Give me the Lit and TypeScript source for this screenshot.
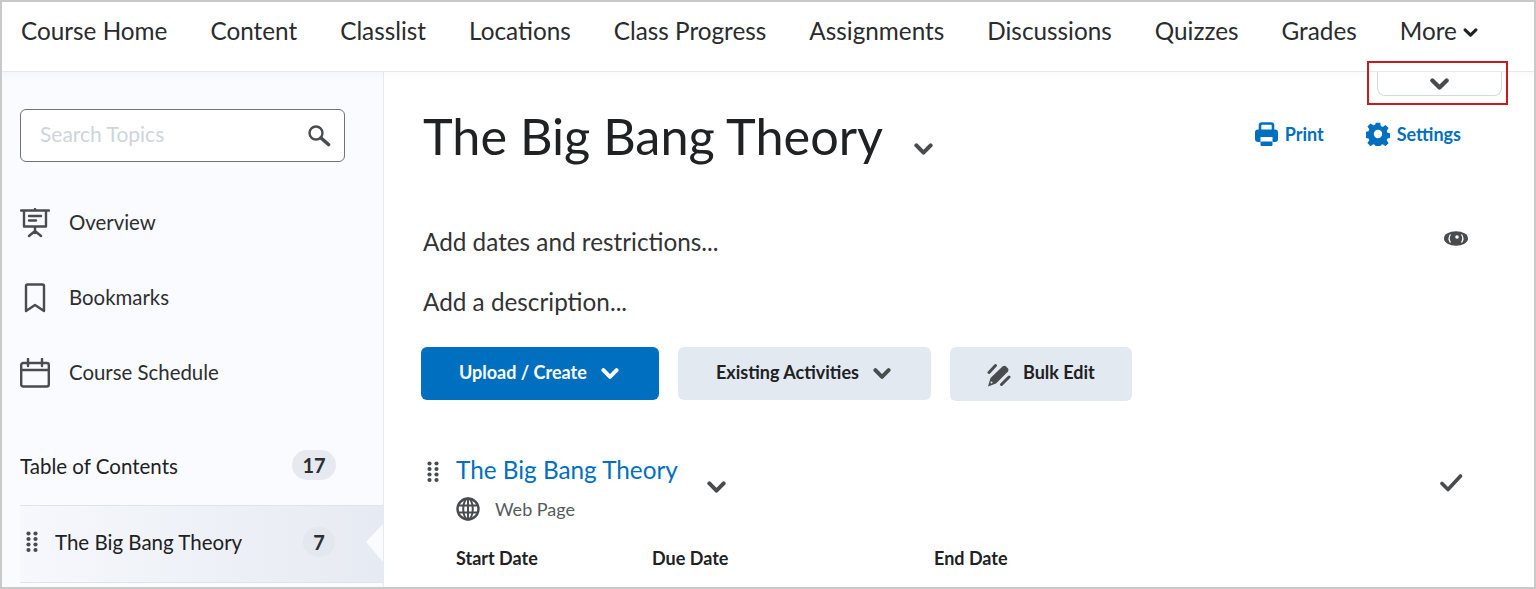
import { LitElement, html, css } from "lit";
import { customElement } from "lit/decorators.js";

const chevron = (w: number, color: string, sw = 3) => html`<svg class="chev" width=${w} height=${Math.round(w * 0.62)} viewBox="0 0 16 10" fill="none" stroke=${color} stroke-width=${sw} stroke-linecap="round" stroke-linejoin="round"><path d="M2 2l6 6 6-6"/></svg>`;

const grip = html`<svg width="12" height="22" viewBox="0 0 12 22" fill="#494c4e"><circle cx="2.500" cy="2.500" r="2.100"/><circle cx="9.500" cy="2.500" r="2.100"/><circle cx="2.500" cy="8" r="2.100"/><circle cx="9.500" cy="8" r="2.100"/><circle cx="2.500" cy="13.500" r="2.100"/><circle cx="9.500" cy="13.500" r="2.100"/><circle cx="2.500" cy="19" r="2.100"/><circle cx="9.500" cy="19" r="2.100"/></svg>`;

const icons = {
  overview: html`<svg width="30" height="30" viewBox="0 0 30 30" fill="none" stroke="#494c4e" stroke-width="2.400" stroke-linecap="round" stroke-linejoin="round"><path d="M1 2.500h28M4 3v15.500h22V3M15 1v1M9 8h12M9 12.500h7M15 19v6M9 28l6-5 6 5"/></svg>`,
  bookmark: html`<svg width="22" height="30" viewBox="0 0 22 30" fill="none" stroke="#494c4e" stroke-width="2.400" stroke-linejoin="round" stroke-linecap="round"><path d="M2 3q0-1.500 1.500-1.500h15Q20 1.500 20 3v25l-9-6-9 6z"/></svg>`,
  calendar: html`<svg width="30" height="30" viewBox="0 0 30 30" fill="none" stroke="#494c4e" stroke-width="2.400" stroke-linejoin="round" stroke-linecap="round"><rect x="1.200" y="5" width="27.600" height="23.500" rx="2"/><path d="M1.500 12h27M8 1v7M22 1v7"/></svg>`,
  search: html`<svg width="24" height="24" viewBox="0 0 24 24" fill="none" stroke="#494c4e"><circle cx="9" cy="9" r="6.500" stroke-width="2.400"/><path d="M14 14l7.500 6.500" stroke-width="3.600" stroke-linecap="round"/></svg>`,
  printer: html`<svg width="23" height="24" viewBox="0 0 23 24"><rect x="5" y="1.500" width="13" height="9" rx="2" fill="none" stroke="#006fbf" stroke-width="2.600"/><rect x="0" y="7.500" width="23" height="12.500" rx="3" fill="#006fbf"/><rect x="5.500" y="15" width="12" height="5" fill="#fff"/><rect x="5.500" y="19.500" width="12" height="4.500" rx="1" fill="#006fbf"/><rect x="7.500" y="17" width="8" height="1.500" fill="#fff"/></svg>`,
  gear: html`<svg width="24" height="24" viewBox="0 0 24 24"><path fill="#006fbf" fill-rule="evenodd" d="M9.800.8h4.400l.6 3.300 1.900.8 2.800-1.900 3.100 3.100-1.900 2.800.8 1.900 3.300.6v4.400l-3.300.6-.8 1.900 1.900 2.800-3.100 3.100-2.800-1.900-1.900.8-.6 3.300H9.800l-.6-3.300-1.900-.8-2.800 1.900-3.100-3.100 1.900-2.800-.8-1.900-3.300-.6V9.800l3.300-.6.8-1.900-1.900-2.800 3.100-3.100 2.800 1.900 1.900-.8zM12 7.800a4.200 4.200 0 1 0 0 8.400 4.200 4.200 0 0 0 0-8.400z"/></svg>`,
  eye: html`<svg width="24" height="15" viewBox="0 0 24 15"><ellipse cx="12" cy="7.500" rx="12" ry="7.300" fill="#494c4e"/><path d="M6.500 3.500a7 7 0 0 0 0 8M17.500 3.500a7 7 0 0 1 0 8" fill="none" stroke="#fff" stroke-width="1.300"/><circle cx="13" cy="6" r="1.800" fill="#fff"/></svg>`,
  pencils: html`<svg width="24" height="25" viewBox="0 0 24 25"><path fill="#494c4e" d="M1 23.500L3.500 15 15.500 3.500Q17.500 2 19 3.500L21 5.500Q22 7 21 8.500L9 20.500z"/><circle cx="4.500" cy="19.500" r="1" fill="#e3e9f1"/><path fill="none" stroke="#494c4e" stroke-width="3" stroke-linecap="round" d="M2 9.500L8.500 2.500M14.500 21.500L22 14"/></svg>`,
  globe: html`<svg width="24" height="24" viewBox="0 0 24 24" fill="none" stroke="#494c4e" stroke-width="2"><circle cx="12" cy="12" r="10.500" stroke-width="2.400"/><ellipse cx="12" cy="12" rx="4.800" ry="10.500"/><path d="M12 1.500v21M2 8.500h20M2 15.500h20"/></svg>`,
  check: html`<svg width="24" height="20" viewBox="0 0 24 20" fill="none" stroke="#494c4e" stroke-width="3.600" stroke-linecap="round" stroke-linejoin="round"><path d="M3 10.500l6 6L21.500 3"/></svg>`,
};

@customElement("app-root")
export class AppRoot extends LitElement {
  static styles = css`
    :host { display: block; width: 1536px; height: 589px; overflow: hidden; }
    * { box-sizing: border-box; }
    .frame { position: relative; width: 1536px; height: 589px; border: 2px solid #c9c9c9; display: flex; flex-direction: column; overflow: hidden; background: #fff; font-family: Lato, "Liberation Sans", sans-serif; color: #202122; }
    .nav { position: relative; z-index: 1; height: 70px; flex: none; display: flex; align-items: center; gap: 43px; padding: 0 0 12px 19px; font-size: 24.300px; border-bottom: 1px solid #e6eaf0; background: #fff; box-shadow: 0 3px 4px rgba(120, 130, 150, 0.05); color: #2a2b2d; }
    .nav span { display: flex; align-items: center; gap: 9px; }
    .nav .navdown { margin-top: 4px; margin-left: -3px; }
    .body { flex: 1; display: flex; min-height: 0; }
    .side { width: 382px; flex: none; border-right: 1px solid #e6eaf0; background: #fafbff; padding: 37px 0 0 18px; display: flex; flex-direction: column; }
    .search { width: 325px; height: 53px; border: 1px solid #6e7376; border-radius: 6px; background: #fff; display: flex; align-items: center; justify-content: space-between; padding: 0 13px 0 19px; font-size: 21px; color: #cdd5dc; }
    .search span { margin-top: -5px; }
    .links { display: flex; flex-direction: column; margin-top: 23px; }
    .link { height: 75px; display: flex; align-items: center; font-size: 20.400px; color: #2d2e30; }
    .link .t { margin-top: -2px; }
    .link .ic { width: 49px; display: flex; justify-content: flex-start; }
    .link .ic.b { padding-left: 4px; }
    .toc { margin-top: 31px; height: 64px; width: 364px; display: flex; align-items: center; justify-content: space-between; padding: 0 48px 16px 0; font-size: 20.500px; }
    .toc .lbl { margin-top: 2px; }
    .badge { background: #e6eaf0; border-radius: 15px; height: 30px; display: flex; align-items: center; justify-content: center; font-weight: 700; font-size: 20px; color: #2d2e30; }
    .toc .badge { width: 44px; }
    .topic { height: 78px; border-top: 1px solid #e0e5ec; border-bottom: 1px solid #e0e5ec; background: linear-gradient(90deg, #f6f8fc, #e6eaf2); display: flex; align-items: center; padding: 0 48px 5px 6px; font-size: 20.500px; clip-path: polygon(0 0, 100% 0, 100% 19px, calc(100% - 17px) 37px, 100% 57px, 100% 100%, 0 100%); }
    .topic svg { margin-right: 17px; }
    .topic .grow { flex: 1; }
    .topic .badge { width: 32px; background: #e3e8ef; }
    .main { flex: 1; padding: 29px 66px 0 37px; min-width: 0; }
    .head { display: flex; align-items: flex-start; justify-content: space-between; }
    .title { display: flex; align-items: center; }
    h1 { margin: 0 0 0 2px; font-size: 50.400px; font-weight: 400; line-height: 70px; color: #202122; }
    .title svg { margin: 26px 0 0 31px; }
    .acts { display: flex; gap: 42px; padding-top: 21px; margin-right: 7px; color: #006fbf; font-size: 18px; font-weight: 700; }
    .act { display: flex; align-items: center; gap: 7px; }
    .row { display: flex; align-items: center; justify-content: space-between; font-size: 24.300px; color: #313335; margin: 0 0 0 2px; }
    .row.d { margin-top: 50px; height: 40px; }
    .row.s { margin-top: 20px; height: 40px; }
    .row svg { margin: -6px 0 0 0; }
    .btns { display: flex; gap: 19px; margin-top: 26px; align-items: flex-start; }
    .btn { height: 53px; border-radius: 6px; display: flex; align-items: center; font-size: 18px; font-weight: 700; background: #e3e9f1; color: #202122; }
    .btn span { margin-top: -3px; }
    .btn.p { width: 238px; background: #006fbf; color: #fff; padding-left: 38px; gap: 14px; }
    .btn.e { width: 253px; padding-left: 38px; gap: 14px; }
    .btn.b { width: 182px; height: 54px; padding-left: 37px; gap: 12px; }
    .btn.b span { margin-top: -5px; }
    .btn.b svg { margin-top: 2px; }
    .item { display: flex; margin-top: 52px; }
    .item .g { width: 35px; padding: 8px 0 0 6px; }
    .item .txt { flex: 1; }
    .item a { font-size: 24.300px; color: #006fbf; line-height: 34px; }
    .tl { display: flex; align-items: center; height: 34px; }
    .tl svg { margin: 34px 0 0 29px; }
    .sub { display: flex; align-items: center; gap: 15px; font-size: 18px; color: #565a5c; height: 28px; margin-top: 8px; }
    .dates { display: flex; font-size: 18px; font-weight: 700; color: #202122; margin-top: 24px; }
    .dates span:nth-child(1) { width: 196px; }
    .dates span:nth-child(2) { width: 282px; }
    .item .ck { margin: 20px 5px 0 0; }
    .tab { position: absolute; z-index: 2; left: 1375px; top: 70px; width: 125px; height: 24px; background: #fff; border: 1px solid #d3d9e3; border-top: 0; border-radius: 0 0 8px 8px; display: flex; align-items: center; justify-content: center; }
    .red { position: absolute; z-index: 3; left: 1365px; top: 59px; width: 141px; height: 44px; border: 2px solid #c8191c; pointer-events: none; }
  `;

  render() {
    const nav = ["Course Home", "Content", "Classlist", "Locations", "Class Progress", "Assignments", "Discussions", "Quizzes", "Grades"];
    return html`<div class="frame">
      <div class="nav">
        ${nav.map((n) => html`<span>${n}</span>`)}
        <span>More <span class="navdown">${chevron(15, "#202122", 3.4)}</span></span>
      </div>
      <div class="body">
        <aside class="side">
          <div class="search"><span>Search Topics</span>${icons.search}</div>
          <div class="links">
            <div class="link"><span class="ic">${icons.overview}</span><span class="t">Overview</span></div>
            <div class="link"><span class="ic b">${icons.bookmark}</span><span class="t">Bookmarks</span></div>
            <div class="link"><span class="ic">${icons.calendar}</span><span class="t">Course Schedule</span></div>
          </div>
          <div class="toc"><span class="lbl">Table of Contents</span><span class="badge">17</span></div>
          <div class="topic">${grip}<span class="grow">The Big Bang Theory</span><span class="badge">7</span></div>
        </aside>
        <main class="main">
          <div class="head">
            <div class="title"><h1>The Big Bang Theory</h1>${chevron(19, "#494c4e", 3.4)}</div>
            <div class="acts">
              <span class="act">${icons.printer}Print</span>
              <span class="act">${icons.gear}Settings</span>
            </div>
          </div>
          <div class="row d"><span>Add dates and restrictions...</span>${icons.eye}</div>
          <div class="row s"><span>Add a description...</span></div>
          <div class="btns">
            <div class="btn p"><span>Upload / Create</span>${chevron(18, "#fff", 3.6)}</div>
            <div class="btn e"><span>Existing Activities</span>${chevron(18, "#494c4e", 3.6)}</div>
            <div class="btn b">${icons.pencils}<span>Bulk Edit</span></div>
          </div>
          <div class="item">
            <div class="g">${grip}</div>
            <div class="txt">
              <div class="tl"><a>The Big Bang Theory</a>${chevron(19, "#494c4e", 3.4)}</div>
              <div class="sub">${icons.globe}<span>Web Page</span></div>
              <div class="dates"><span>Start Date</span><span>Due Date</span><span>End Date</span></div>
            </div>
            <div class="ck">${icons.check}</div>
          </div>
        </main>
      </div>
      <div class="tab">${chevron(19, "#494c4e", 3.6)}</div>
      <div class="red"></div>
    </div>`;
  }
}
